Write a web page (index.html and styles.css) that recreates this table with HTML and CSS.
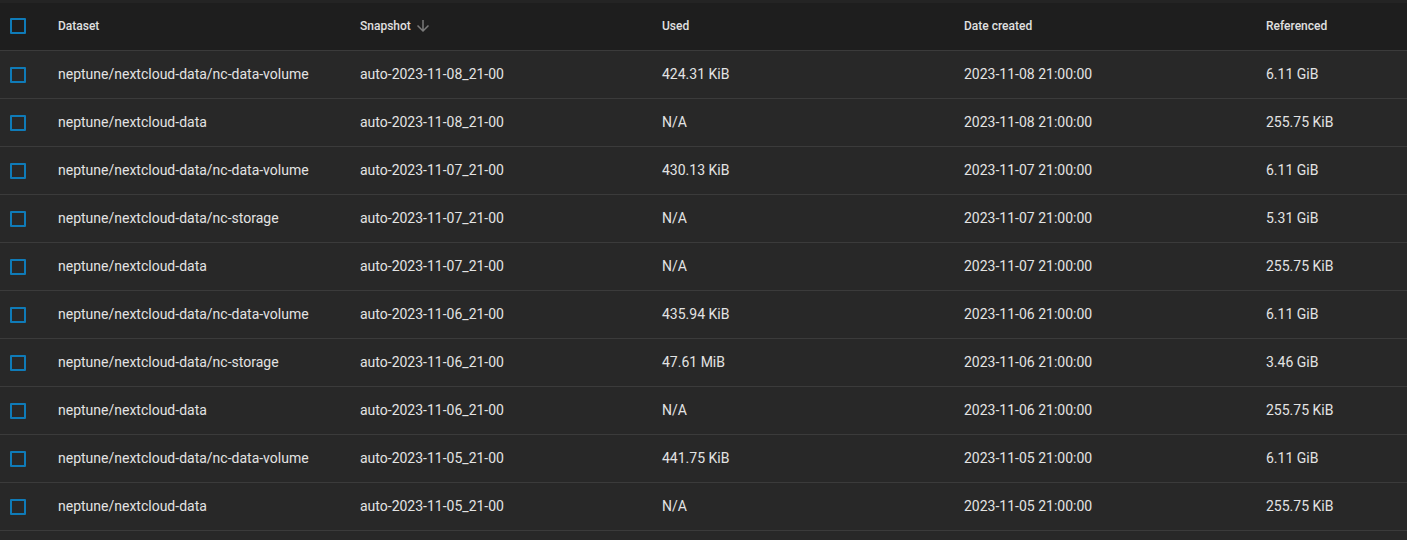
FILE: index.html
```html
<!DOCTYPE html>
<html>
<head>
<meta charset="utf-8">
<link rel="stylesheet" href="styles.css">
</head>
<body>
<div class="strip"></div>
<div class="table">
  <div class="row head">
    <div class="cell check"><span class="box"></span></div>
    <div class="cell">Dataset</div>
    <div class="cell">Snapshot
      <svg class="sort" width="18" height="18" viewBox="0 0 24 24"><path d="M20 12l-1.41-1.41L13 16.17V4h-2v12.17l-5.58-5.59L4 12l8 8 8-8z" fill="#7a7a7a"/></svg>
    </div>
    <div class="cell">Used</div>
    <div class="cell">Date created</div>
    <div class="cell">Referenced</div>
  </div>
  <div class="row"><div class="cell check"><span class="box"></span></div><div class="cell">neptune/nextcloud-data/nc-data-volume</div><div class="cell">auto-2023-11-08_21-00</div><div class="cell">424.31 KiB</div><div class="cell">2023-11-08 21:00:00</div><div class="cell">6.11 GiB</div></div>
  <div class="row"><div class="cell check"><span class="box"></span></div><div class="cell">neptune/nextcloud-data</div><div class="cell">auto-2023-11-08_21-00</div><div class="cell">N/A</div><div class="cell">2023-11-08 21:00:00</div><div class="cell">255.75 KiB</div></div>
  <div class="row"><div class="cell check"><span class="box"></span></div><div class="cell">neptune/nextcloud-data/nc-data-volume</div><div class="cell">auto-2023-11-07_21-00</div><div class="cell">430.13 KiB</div><div class="cell">2023-11-07 21:00:00</div><div class="cell">6.11 GiB</div></div>
  <div class="row"><div class="cell check"><span class="box"></span></div><div class="cell">neptune/nextcloud-data/nc-storage</div><div class="cell">auto-2023-11-07_21-00</div><div class="cell">N/A</div><div class="cell">2023-11-07 21:00:00</div><div class="cell">5.31 GiB</div></div>
  <div class="row"><div class="cell check"><span class="box"></span></div><div class="cell">neptune/nextcloud-data</div><div class="cell">auto-2023-11-07_21-00</div><div class="cell">N/A</div><div class="cell">2023-11-07 21:00:00</div><div class="cell">255.75 KiB</div></div>
  <div class="row"><div class="cell check"><span class="box"></span></div><div class="cell">neptune/nextcloud-data/nc-data-volume</div><div class="cell">auto-2023-11-06_21-00</div><div class="cell">435.94 KiB</div><div class="cell">2023-11-06 21:00:00</div><div class="cell">6.11 GiB</div></div>
  <div class="row"><div class="cell check"><span class="box"></span></div><div class="cell">neptune/nextcloud-data/nc-storage</div><div class="cell">auto-2023-11-06_21-00</div><div class="cell">47.61 MiB</div><div class="cell">2023-11-06 21:00:00</div><div class="cell">3.46 GiB</div></div>
  <div class="row"><div class="cell check"><span class="box"></span></div><div class="cell">neptune/nextcloud-data</div><div class="cell">auto-2023-11-06_21-00</div><div class="cell">N/A</div><div class="cell">2023-11-06 21:00:00</div><div class="cell">255.75 KiB</div></div>
  <div class="row"><div class="cell check"><span class="box"></span></div><div class="cell">neptune/nextcloud-data/nc-data-volume</div><div class="cell">auto-2023-11-05_21-00</div><div class="cell">441.75 KiB</div><div class="cell">2023-11-05 21:00:00</div><div class="cell">6.11 GiB</div></div>
  <div class="row"><div class="cell check"><span class="box"></span></div><div class="cell">neptune/nextcloud-data</div><div class="cell">auto-2023-11-05_21-00</div><div class="cell">N/A</div><div class="cell">2023-11-05 21:00:00</div><div class="cell">255.75 KiB</div></div>
</div>
</body>
</html>
```
FILE: styles.css
```css
html, body {
  margin: 0;
  padding: 0;
  background: #282828;
  font-family: Roboto, "Liberation Sans", sans-serif;
  color: #e3e3e3;
  overflow: hidden;
}
.strip {
  height: 3px;
  background: #242424;
}
.table {
  display: flex;
  flex-direction: column;
}
.row {
  display: grid;
  grid-template-columns: 58px 302px 302px 302px 302px 1fr;
  height: 47px;
  border-bottom: 1px solid #3b3b3b;
  align-items: center;
  font-size: 14px;
}
.row.head {
  background: #1e1e1e;
  font-size: 12px;
  font-weight: 500;
  color: #e0e0e0;
}
.cell {
  display: flex;
  align-items: center;
  white-space: nowrap;
  padding-bottom: 1px;
}
.head .cell {
  padding-bottom: 2px;
}
.row .check {
  padding-left: 10px;
  padding-bottom: 0;
}
.box {
  display: block;
  width: 12px;
  height: 12px;
  border: 2px solid #0f7bb8;
  border-radius: 1px;
}
.head .check .box {
  margin-top: -1px;
}
.sort {
  margin-left: 3px;
}
```
